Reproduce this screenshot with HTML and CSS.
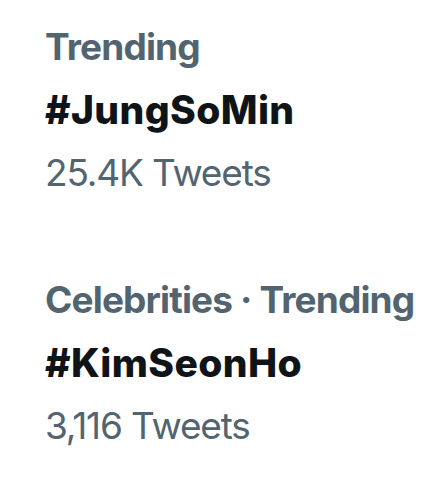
FILE: index.html
```html
<!DOCTYPE html>
<html>
<head>
<meta charset="utf-8">
<link rel="stylesheet" href="styles.css">
</head>
<body>
<div class="list">
  <div class="trend">
    <div class="meta">Trending</div>
    <div class="tag">#JungSoMin</div>
    <div class="count">25.4K Tweets</div>
  </div>
  <div class="trend">
    <div class="meta">Celebrities · Trending</div>
    <div class="tag">#KimSeonHo</div>
    <div class="count">3,116 Tweets</div>
  </div>
</div>
</body>
</html>
```
FILE: styles.css
```css
html, body {
  margin: 0;
  padding: 0;
  background: #ffffff;
}
body {
  font-family: Inter, "Noto Sans", sans-serif;
  width: 445px;
  height: 503px;
  overflow: hidden;
}
.list {
  display: flex;
  flex-direction: column;
  gap: 64px;
  padding: 15px 0 0 45px;
}
.trend {
  display: flex;
  flex-direction: column;
}
.meta, .tag, .count {
  font-size: 37px;
  line-height: 63px;
  white-space: nowrap;
}
.meta {
  color: #536471;
  font-weight: 700;
  letter-spacing: -0.85px;
}
.tag {
  color: #0f1419;
  font-weight: 800;
  font-size: 39px;
  letter-spacing: 0.4px;
}
.count {
  color: #536471;
  font-weight: 400;
  letter-spacing: -1.15px;
}
```
